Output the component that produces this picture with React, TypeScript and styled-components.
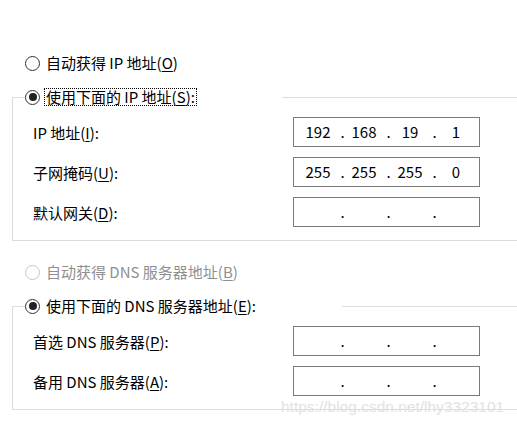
import { FC, ReactNode } from "react";
import styled, { createGlobalStyle } from "styled-components";

const GlobalStyle = createGlobalStyle`
  html,
  body {
    margin: 0;
    padding: 0;
    overflow: hidden;
    background: #ffffff;
  }

  body {
    font-family: "Noto Sans CJK SC", "Noto Sans", sans-serif;
    font-size: 15px;
    color: #000000;
  }
`;

interface RadioRowAttributes {
  label: ReactNode;
  checked?: boolean;
  disabled?: boolean;
  focused?: boolean;
}

interface GroupAttributes {
  legendWidth: number;
  legend: ReactNode;
  children?: ReactNode;
}

interface FieldRowAttributes {
  label: ReactNode;
  value?: [string, string, string, string];
}

const RadioRow: FC<RadioRowAttributes> = (props) => {
  return (
    <StyledRadioRow>
      <StyledRadio $checked={!!props.checked} $disabled={!!props.disabled} />
      <StyledRadioLabel $disabled={!!props.disabled} $focused={!!props.focused}>
        {props.label}
      </StyledRadioLabel>
    </StyledRadioRow>
  );
};

const Group: FC<GroupAttributes> = (props) => {
  return (
    <StyledGroup>
      <StyledLegend $width={props.legendWidth}>{props.legend}</StyledLegend>
      <StyledGroupBody>{props.children}</StyledGroupBody>
    </StyledGroup>
  );
};

const IpField: FC<{ value?: [string, string, string, string] }> = (props) => {
  const parts = props.value ?? ["", "", "", ""];

  return (
    <StyledIpField>
      {parts.map((part, index) => (
        <StyledIpPart key={index}>
          <StyledSegment>{part}</StyledSegment>
          {index < 3 && <StyledDot>.</StyledDot>}
        </StyledIpPart>
      ))}
    </StyledIpField>
  );
};

const FieldRow: FC<FieldRowAttributes> = (props) => {
  return (
    <StyledFieldRow>
      <StyledFieldLabel>{props.label}</StyledFieldLabel>
      <IpField value={props.value} />
    </StyledFieldRow>
  );
};

export default function App() {
  return (
    <>
      <GlobalStyle />
      <StyledPage>
        <RadioRow
          label={
            <>
              自动获得 IP 地址(<u>O</u>)
            </>
          }
        />
        <Group
          legendWidth={257}
          legend={
            <RadioRow
              checked
              focused
              label={
                <>
                  使用下面的 IP 地址(<u>S</u>):
                </>
              }
            />
          }
        >
          <FieldRow
            label={
              <>
                IP 地址(<u>I</u>):
              </>
            }
            value={["192", "168", "19", "1"]}
          />
          <FieldRow
            label={
              <>
                子网掩码(<u>U</u>):
              </>
            }
            value={["255", "255", "255", "0"]}
          />
          <FieldRow
            label={
              <>
                默认网关(<u>D</u>):
              </>
            }
          />
        </Group>

        <StyledSpacer $height={21} />

        <RadioRow
          disabled
          label={
            <>
              自动获得 DNS 服务器地址(<u>B</u>)
            </>
          }
        />
        <Group
          legendWidth={317}
          legend={
            <RadioRow
              checked
              label={
                <>
                  使用下面的 DNS 服务器地址(<u>E</u>):
                </>
              }
            />
          }
        >
          <FieldRow
            label={
              <>
                首选 DNS 服务器(<u>P</u>):
              </>
            }
          />
          <FieldRow
            label={
              <>
                备用 DNS 服务器(<u>A</u>):
              </>
            }
          />
        </Group>

        <StyledWatermark>https://blog.csdn.net/lhy3323101</StyledWatermark>
      </StyledPage>
    </>
  );
}

const StyledPage = styled.div`
  position: relative;
  width: 517px;
  height: 427px;
  box-sizing: border-box;
  padding: 53px 0 0 12px;
  display: flex;
  flex-direction: column;
  align-items: stretch;
  overflow: hidden;
`;

const StyledRadioRow = styled.div`
  height: 20px;
  display: flex;
  align-items: center;
  margin-left: 13px;

  legend & {
    margin-left: 0;
  }
`;

const StyledRadio = styled.span<{ $checked: boolean; $disabled: boolean }>`
  position: relative;
  width: 15px;
  height: 15px;
  box-sizing: border-box;
  flex-shrink: 0;
  border-radius: 50%;
  border: 1px solid ${({ $disabled }) => ($disabled ? "#c6c6c6" : "#333333")};
  background: #ffffff;

  &::after {
    content: "";
    display: ${({ $checked }) => ($checked ? "block" : "none")};
    position: absolute;
    left: 2.5px;
    top: 2.5px;
    width: 8px;
    height: 8px;
    border-radius: 50%;
    background: #222222;
  }
`;

const StyledRadioLabel = styled.span<{ $disabled: boolean; $focused: boolean }>`
  margin-left: 4px;
  padding: 0 1px;
  height: 18px;
  box-sizing: border-box;
  line-height: 16px;
  white-space: nowrap;
  border: 1px ${({ $focused }) => ($focused ? "dotted #000000" : "solid transparent")};
  color: ${({ $disabled }) => ($disabled ? "#8f8f8f" : "#000000")};

  u {
    text-underline-offset: 2px;
  }
`;

const StyledSpacer = styled.div<{ $height: number }>`
  height: ${({ $height }) => $height}px;
  flex-shrink: 0;
`;

const StyledGroup = styled.fieldset`
  margin: 14px 0 0 0;
  box-sizing: border-box;
  padding: 10px 0 13px 12px;
  border: 1px solid #dcdcdc;
  border-right: none;
  min-width: 0;
`;

const StyledLegend = styled.legend<{ $width: number }>`
  width: ${({ $width }) => $width}px;
  height: 20px;
  padding: 0;
  margin: 0;
  box-sizing: border-box;
`;

const StyledGroupBody = styled.div`
  display: flex;
  flex-direction: column;
  gap: 10px;
  padding-left: 8px;
`;

const StyledFieldRow = styled.div`
  height: 30px;
  display: flex;
  align-items: center;
`;

const StyledFieldLabel = styled.div`
  width: 260px;
  flex-shrink: 0;
  white-space: nowrap;

  u {
    text-underline-offset: 2px;
  }
`;

const StyledIpField = styled.div`
  width: 187px;
  height: 30px;
  box-sizing: border-box;
  border: 1px solid #7a7a7a;
  padding-left: 7px;
  display: flex;
  align-items: center;
  background: #ffffff;
`;

const StyledIpPart = styled.div`
  display: flex;
  align-items: center;
`;

const StyledSegment = styled.span`
  width: 34px;
  text-align: center;
  line-height: 20px;
`;

const StyledDot = styled.span`
  width: 12px;
  box-sizing: border-box;
  padding-left: 3px;
  text-align: center;
  line-height: 20px;
`;

const StyledWatermark = styled.div`
  position: absolute;
  left: 281px;
  top: 399px;
  font-family: "Liberation Sans", Arial, sans-serif;
  font-size: 15.5px;
  line-height: 16px;
  color: #e2e2e2;
  white-space: nowrap;
`;
